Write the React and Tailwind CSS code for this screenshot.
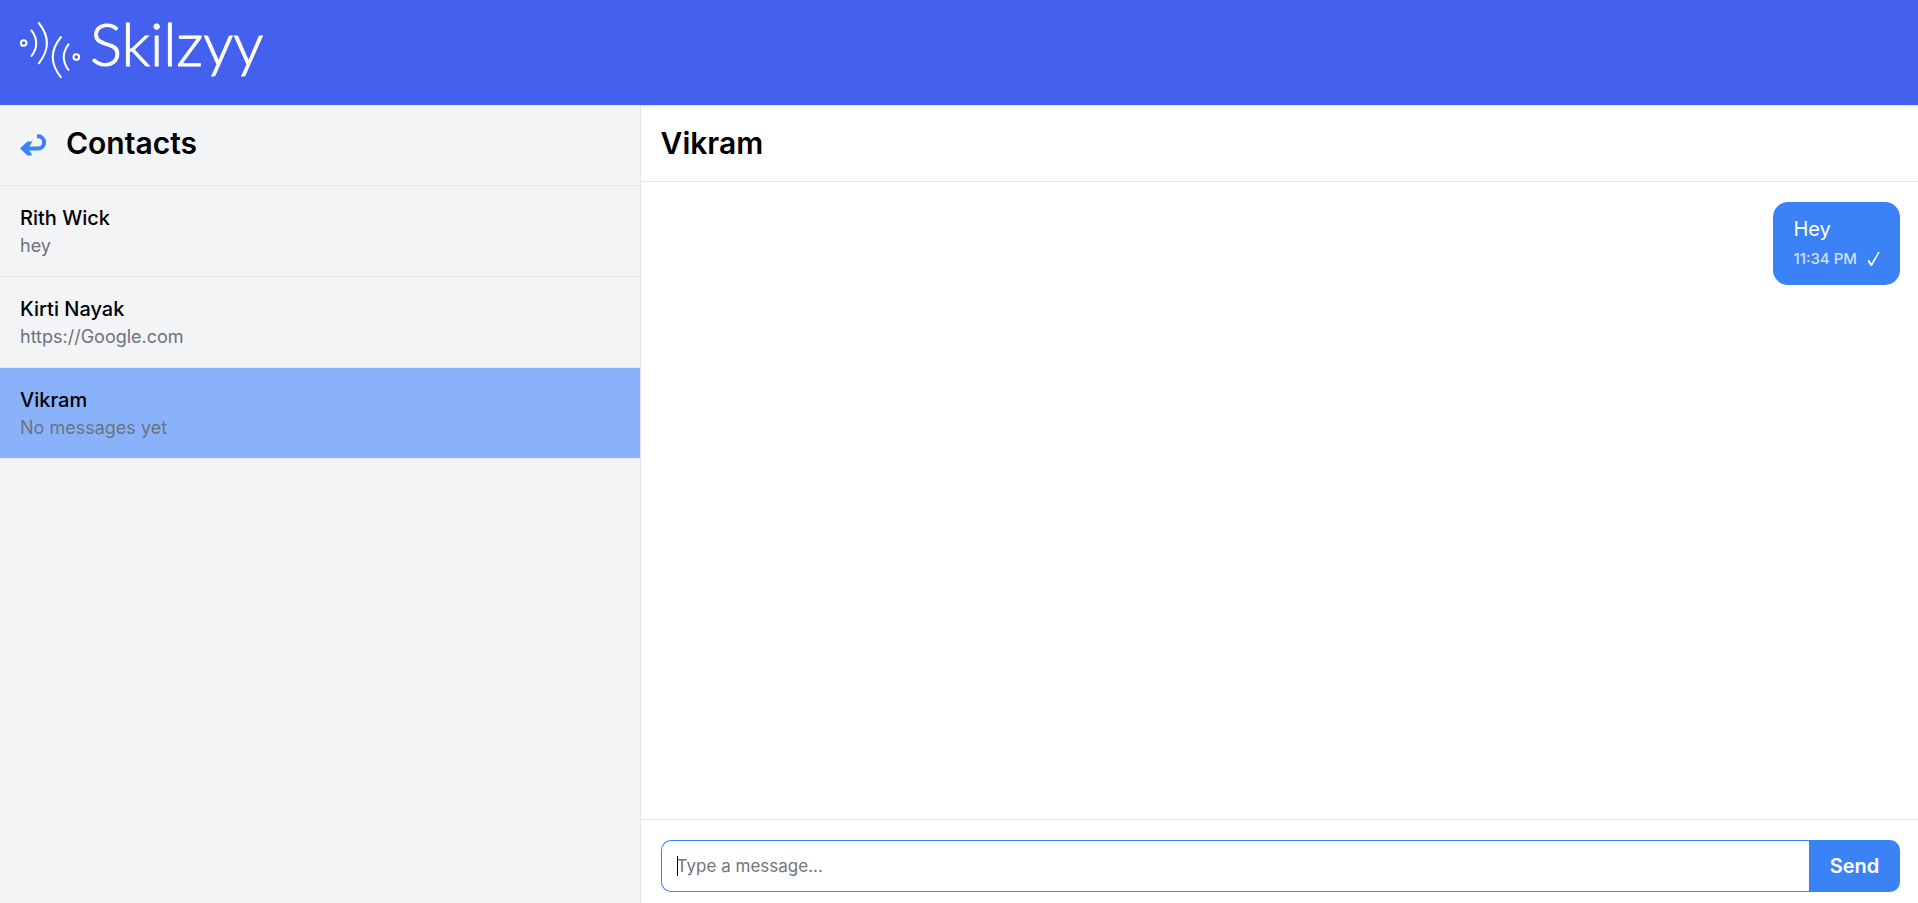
import React from "react";

const contacts = [
  { name: "Rith Wick", last: "hey" },
  { name: "Kirti Nayak", last: "https://Google.com" },
  { name: "Vikram", last: "No messages yet", active: true },
];

function LogoMark() {
  return (
    <svg className="h-[60px] w-[60px]" viewBox="0 0 60 60" fill="none" stroke="white" strokeWidth="2" strokeLinecap="round" aria-hidden="true">
      <circle cx="3.7" cy="23" r="2.8" />
      <path d="M11.5 10.3Q21 23.3 11.5 36" />
      <path d="M18.8 3Q35 23 18.8 43.3" />
      <circle cx="56.3" cy="37" r="2.8" />
      <path d="M48.5 24.3Q39 37 48.5 50" />
      <path d="M41 17Q24.5 37 41 57.3" />
    </svg>
  );
}

function ReturnIcon() {
  return (
    <svg className="h-[22px] w-[26px]" viewBox="0 0 26 22" fill="none" aria-hidden="true">
      <path d="M17 2.3H18A6.1 6.1 0 0 1 18 14.5H7" stroke="currentColor" strokeWidth="4" />
      <path d="M0 14.5 7.5 7.5H12.5L8 14.5 12.5 21.5H7.5Z" fill="currentColor" />
    </svg>
  );
}

function Contact({ name, last, active }) {
  return (
    <li className="border-b border-[#e5e7eb]">
      <button type="button" className={`block w-full px-5 pt-[17px] pb-[18px] text-left ${active ? "bg-[#89b2fa]" : "hover:bg-gray-200"}`}>
        <span className="block text-[20px] leading-[30px] font-medium text-black">{name}</span>
        <span className="block text-[18px] leading-[25px] text-[#6b7280]">{last}</span>
      </button>
    </li>
  );
}

export default function App() {
  return (
    <div className="flex h-screen flex-col bg-white font-['Inter',sans-serif] text-black">
      <header className="relative flex h-[105px] shrink-0 items-start gap-[10px] bg-[#4361ee] px-5 pt-5 text-white shadow-sm">
        <LogoMark />
        <span className="font-['Lato',sans-serif] text-[60px] leading-[46px] font-light [-webkit-text-stroke:1px_white]">Skilzyy</span>
      </header>
      <div className="flex min-h-0 flex-1">
        <aside className="relative w-[33.4%] border-r border-[#e5e7eb] bg-[#f3f4f6]">
          <div className="flex h-[81px] items-start gap-5 border-b border-[#e5e7eb] px-5 pt-[18px]">
            <button type="button" aria-label="Back" className="flex h-11 items-center text-[#3b82f6]">
              <ReturnIcon />
            </button>
            <h2 className="text-[30px] leading-10 font-semibold">Contacts</h2>
          </div>
          <ul>
            {contacts.map((c) => (
              <Contact key={c.name} {...c} />
            ))}
          </ul>
        </aside>
        <main className="flex min-w-0 flex-1 flex-col">
          <div className="border-b border-[#e5e7eb] px-5 py-[18px]">
            <h2 className="text-[30px] leading-10 font-semibold">Vikram</h2>
          </div>
          <div className="flex flex-1 flex-col items-end overflow-y-auto px-[18px] py-5">
            <div className="rounded-[15px] bg-[#3b82f6] px-5 py-3 text-white">
              <p className="text-[20px] leading-[30px]">Hey</p>
              <div className="flex items-center gap-[10px] text-[15px] leading-[29px] font-medium">
                <span className="opacity-75">11:34 PM</span>
                <svg className="h-4 w-[13px]" viewBox="0 0 13 16" fill="none" role="img" aria-label="Sent">
                  <path d="M0.5 10 2 8.8 4.4 12.4 11.2 1H12.7L5 15H3.7Z" fill="white" />
                </svg>
              </div>
            </div>
          </div>
          <form className="flex border-t border-[#e5e7eb] pt-5 pr-[18px] pb-[11px] pl-5" onSubmit={(e) => e.preventDefault()}>
            <div className="relative flex min-w-0 flex-1">
              <input
                type="text"
                aria-label="Message"
                placeholder="Type a message..."
                className="h-[52px] w-full rounded-l-[10px] border border-r-0 border-[#3b82f6] px-[15px] text-[17px] outline-none placeholder:text-[#757575]"
              />
              <span className="pointer-events-none absolute top-4 left-4 h-5 w-px bg-black" aria-hidden="true" />
            </div>
            <button type="submit" className="w-[91px] rounded-r-[10px] bg-[#3b82f6] text-[20px] font-semibold text-white">Send</button>
          </form>
        </main>
      </div>
    </div>
  );
}
